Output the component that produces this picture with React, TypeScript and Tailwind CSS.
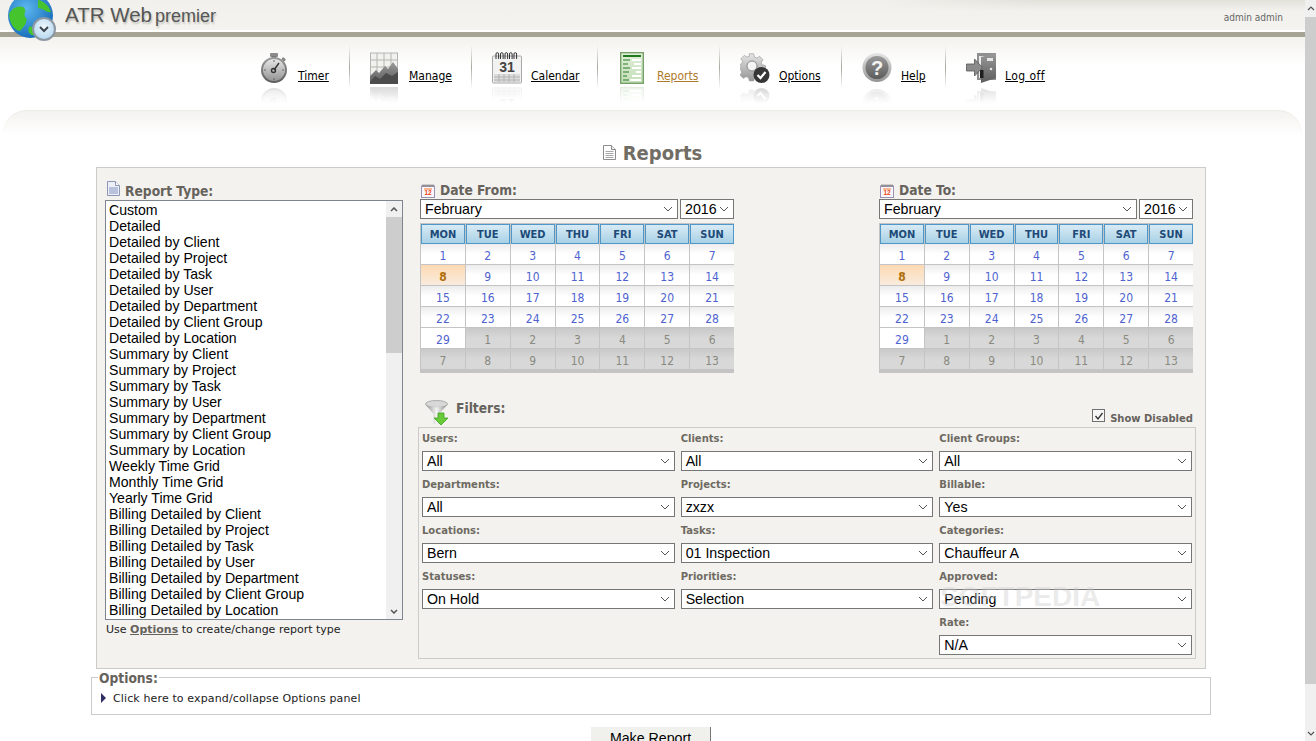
import React from "react";

const REPORTS = ["Custom","Detailed","Detailed by Client","Detailed by Project","Detailed by Task","Detailed by User","Detailed by Department","Detailed by Client Group","Detailed by Location","Summary by Client","Summary by Project","Summary by Task","Summary by User","Summary by Department","Summary by Client Group","Summary by Location","Weekly Time Grid","Monthly Time Grid","Yearly Time Grid","Billing Detailed by Client","Billing Detailed by Project","Billing Detailed by Task","Billing Detailed by User","Billing Detailed by Department","Billing Detailed by Client Group","Billing Detailed by Location"];

const FILTERS: [string, string][][] = [
  [["Users:","All"],["Clients:","All"],["Client Groups:","All"]],
  [["Departments:","All"],["Projects:","zxzx"],["Billable:","Yes"]],
  [["Locations:","Bern"],["Tasks:","01 Inspection"],["Categories:","Chauffeur A"]],
  [["Statuses:","On Hold"],["Priorities:","Selection"],["Approved:","Pending"]],
];

const Defs = () => (
  <defs>
    <linearGradient id="g1" x1="0" y1="0" x2="0" y2="1"><stop offset="0" stopColor="#e6e6e6"/><stop offset="1" stopColor="#949494"/></linearGradient>
    <linearGradient id="g2" x1="0" y1="0" x2="0" y2="1"><stop offset="0" stopColor="#9a9a9a"/><stop offset="1" stopColor="#5c5c5c"/></linearGradient>
    <linearGradient id="g3" x1="0" y1="0" x2="0" y2="1"><stop offset="0" stopColor="#e0efd8"/><stop offset="1" stopColor="#c3dfb8"/></linearGradient>
  </defs>
);

const TimerIcon = () => (
  <svg viewBox="0 0 28 32" className="w-[28px] h-[32px]">
    <Defs/>
    <rect x="10" y="1" width="8" height="4" rx="1" fill="#8b8b8b"/>
    <rect x="12" y="4" width="4" height="3" fill="#777"/>
    <rect x="22" y="6" width="4" height="3" rx="1" fill="#888" transform="rotate(40 24 7)"/>
    <circle cx="14" cy="18" r="13" fill="url(#g2)"/>
    <circle cx="14" cy="18" r="11" fill="url(#g1)"/>
    <path d="M14 18 L19 11" stroke="#333" strokeWidth="1.4"/>
    <circle cx="13.5" cy="18.5" r="2" fill="none" stroke="#333" strokeWidth="1.4"/>
    <path d="M14 8v2M24 18h-2M4 18h2M14 28v-2" stroke="#666" strokeWidth="1"/>
  </svg>
);
const ManageIcon = () => (
  <svg viewBox="0 0 28 32" className="w-[28px] h-[32px]">
    <Defs/>
    <rect x="0.5" y="1" width="27" height="29" fill="#f1f1ee" stroke="#b5b5b0"/>
    <path d="M0 8h28M0 15h28M7 1v20M14 1v18M21 1v16" stroke="#b5b5b0" strokeWidth="1"/>
    <path d="M0 24 L6 18 L9 21 L15 14 L18 17 L23 10 L28 17 V31 H0Z" fill="url(#g2)"/>
    <path d="M0 30 L5 24 L10 27 L16 21 L22 24 L28 20 V32 H0Z" fill="#4b4b4b"/>
  </svg>
);
const CalendarIcon = () => (
  <svg viewBox="0 0 30 32" className="w-[30px] h-[32px]">
    <Defs/>
    <rect x="0.5" y="4" width="29" height="27" rx="1" fill="#f2f2f2" stroke="#a8a8a8"/>
    <rect x="2" y="22" width="26" height="8" fill="#dcdcdc"/>
    <path d="M2 25h26M2 28h26M7 22v8M12 22v8M17 22v8M22 22v8" stroke="#a5a5a5" strokeWidth="0.7"/>
    <path d="M4 7V2a1.3 1.3 0 0 1 2.6 0V7M8.500 7V2a1.300 1.300 0 0 1 2.600 0V7M13 7V2a1.300 1.300 0 0 1 2.600 0V7M17.500 7V2a1.300 1.300 0 0 1 2.600 0V7M22 7V2a1.300 1.300 0 0 1 2.600 0V7" fill="none" stroke="#333" strokeWidth="1"/>
    <text x="15" y="20" textAnchor="middle" fontSize="14" fontWeight="700" fontFamily="'Liberation Sans',sans-serif" fill="#444">31</text>
  </svg>
);
const ReportsIcon = () => (
  <svg viewBox="0 0 24 32" className="w-[24px] h-[32px]">
    <Defs/>
    <rect x="0.700" y="0.700" width="22.600" height="30.600" fill="url(#g3)" stroke="#6f9c62" strokeWidth="1.300"/>
    <rect x="3" y="3" width="18" height="2" fill="#1f7a1f"/>
    <path d="M3 8h7M3 12h5M3 16h7M3 20h6M3 24h4M3 28h6" stroke="#2b7d2b" strokeWidth="1.200"/>
    <path d="M12 8h9M14 12h7M12 16h9M16 20h5M12 24h9M10 28h11" stroke="#fff" strokeWidth="2.200"/>
  </svg>
);
const OptionsIcon = () => (
  <svg viewBox="0 0 30 32" className="w-[30px] h-[32px]">
    <Defs/>
    <path d="M11 1h5l1 4 3 1 3-2 4 4-2 3 1 3 4 1v5l-4 1-1 3 2 3-4 4-3-2-3 1-1 3h-5l-1-4-3-1-3 2-4-4 2-3-1-3-3-1v-5l4-1 1-3-2-3 4-4 3 2 3-1z" fill="url(#g1)" stroke="#9c9c9c" strokeWidth="0.800" transform="scale(0.85) translate(0,1)"/>
    <circle cx="12" cy="14" r="5" fill="#f5f5f5" stroke="#8a8a8a"/>
    <circle cx="21.500" cy="23" r="8" fill="#363636"/>
    <path d="M17.500 23l3 3 5-6" fill="none" stroke="#fff" strokeWidth="2.200"/>
  </svg>
);
const HelpIcon = () => (
  <svg viewBox="0 0 30 32" className="w-[30px] h-[32px]">
    <Defs/>
    <circle cx="15" cy="15.500" r="14.500" fill="url(#g1)"/>
    <circle cx="15" cy="15.500" r="11.500" fill="url(#g2)"/>
    <text x="15" y="22.500" textAnchor="middle" fontSize="20" fontWeight="700" fontFamily="'Liberation Sans',sans-serif" fill="#f3f3f3">?</text>
  </svg>
);
const LogoffIcon = () => (
  <svg viewBox="0 0 32 32" className="w-[32px] h-[32px]">
    <Defs/>
    <rect x="11" y="1" width="19" height="27" fill="#8f8f8f"/>
    <rect x="13" y="4" width="6" height="22" fill="#ececec"/>
    <path d="M15 5 L30 1 V26 L15 31Z" fill="url(#g2)"/>
    <rect x="21" y="6" width="6" height="3" fill="#e6e6e6"/>
    <rect x="14" y="18" width="3.500" height="8" fill="#1e1e1e"/>
    <circle cx="25" cy="17" r="1.300" fill="#e4e4e4"/>
    <path d="M0.500 12h8V7l8 8.500-8 8.500v-5h-8z" fill="#8b8b8b" stroke="#555" strokeWidth="0.800"/>
  </svg>
);

const NAV = [
  { label: "Timer", Icon: TimerIcon, box: "w-[38px]", text: "w-[31px]" },
  { label: "Manage", Icon: ManageIcon, box: "w-[39px]", text: "w-[42px]" },
  { label: "Calendar", Icon: CalendarIcon, box: "w-[39px]", text: "w-[46px]" },
  { label: "Reports", Icon: ReportsIcon, box: "w-[39px] pl-[2px]", text: "w-[42px]", active: true },
  { label: "Options", Icon: OptionsIcon, box: "w-[39px]", text: "w-[42px]" },
  { label: "Help", Icon: HelpIcon, box: "w-[39px]", text: "w-[24px]" },
  { label: "Log off", Icon: LogoffIcon, box: "w-[39px]", text: "w-[39px] tracking-[0.450px]" },
];

const Chevron = () => (
  <svg viewBox="0 0 10 6" className="w-[10px] h-[6px] shrink-0 text-[#555]"><path d="M1 1l4 4 4-4" fill="none" stroke="currentColor" strokeWidth="1"/></svg>
);

const Sel = ({ value, cls = "" }: { value: string; cls?: string }) => (
  <div className={`h-[20px] bg-white border border-[#767676] flex items-center justify-between pl-[4px] pr-[4px] text-[14.200px] leading-none text-black font-['Liberation_Sans',sans-serif] ${cls}`}>
    <span>{value}</span><Chevron/>
  </div>
);

const SmallCal = () => (
  <svg viewBox="0 0 14 14" className="w-[14px] h-[14px] shrink-0">
    <rect x="0.500" y="2" width="13" height="11.500" fill="#f8f7fb" stroke="#9a90b4"/>
    <path d="M2 3V0.500M4 3V0.500M6 3V0.500M8 3V0.500M10 3V0.500M12 3V0.500" stroke="#444" strokeWidth="0.800"/>
    <rect x="3" y="4.500" width="8" height="1" fill="#ff7a30"/>
    <text x="7" y="11" textAnchor="middle" fontSize="6.500" fontWeight="700" fill="#f0420e" fontFamily="'Liberation Sans',sans-serif">12</text>
  </svg>
);
const DocIcon = () => (
  <svg viewBox="0 0 13 15" className="w-[13px] h-[15px] shrink-0">
    <path d="M0.500 0.500h8l4 4v10h-12z" fill="#eef0f7" stroke="#8f96b4"/>
    <path d="M8.500 0.500v4h4" fill="#fff" stroke="#8f96b4"/>
    <rect x="2" y="6" width="9" height="7" fill="#b9c2dc"/>
  </svg>
);
const TitleDoc = () => (
  <svg viewBox="0 0 13 15" className="w-[13px] h-[15px] shrink-0">
    <path d="M0.500 0.500h8l4 4v10h-12z" fill="#fff" stroke="#8d8d8d"/>
    <path d="M8.500 0.500v4h4" fill="#eee" stroke="#8d8d8d"/>
    <path d="M2.500 6.500h8M2.500 8.500h8M2.500 10.500h8M2.500 12.500h8" stroke="#a8a8a8" strokeWidth="1"/>
  </svg>
);
const Funnel = () => (
  <svg viewBox="0 0 24 26" className="w-[24px] h-[26px] shrink-0">
    <defs><linearGradient id="fn" x1="0" y1="0" x2="1" y2="0"><stop offset="0" stopColor="#8c8c8c"/><stop offset="0.500" stopColor="#f4f4f4"/><stop offset="1" stopColor="#8a8a8a"/></linearGradient></defs>
    <ellipse cx="11.500" cy="4" rx="11" ry="3.500" fill="#d8d8d8" stroke="#aaa"/>
    <path d="M0.500 4.500 L8.500 14 V24 H14 V14 L22.500 4.500 C18 8 5 8 0.500 4.500Z" fill="url(#fn)"/>
    <path d="M13 13h6v5h4l-7 7-7-7h4z" fill="#6acb3a" stroke="#3f9f22" strokeWidth="0.800"/>
  </svg>
);

const DAYS: [number, boolean][] = [
  ...Array.from({ length: 29 }, (_, i) => [i + 1, false] as [number, boolean]),
  ...Array.from({ length: 13 }, (_, i) => [i + 1, true] as [number, boolean]),
];

const COND = "font-['DejaVu_Sans_Condensed','DejaVu_Sans',sans-serif]";

const Calendar = () => (
  <div className="w-[314px] h-[150px] bg-[#c4c4c4] pb-[3px] font-['DejaVu_Sans_Condensed','DejaVu_Sans',sans-serif]">
    <div className="grid grid-cols-7 h-[21px] pt-[1px] gap-x-[1px] pl-[1px]">
      {["MON","TUE","WED","THU","FRI","SAT","SUN"].map((d) => (
        <div key={d} className="h-[20px] pt-[3px] border border-[#4f97c8] bg-gradient-to-b from-[#d8ebf5] to-[#a8d1e6] flex items-center justify-center text-[11px] font-bold text-[#1d4a78]">{d}</div>
      ))}
    </div>
    <div className="grid grid-cols-7 gap-x-[1px] gap-y-[1px] pl-[1px]">
      {DAYS.map(([n, other], i) => {
        const today = i === 7;
        return (
          <div key={i} className={`h-[20px] pt-[3px] flex items-center justify-center text-[12px] bg-gradient-to-b ${today ? "from-[#fdd9b2] to-[#f8ecde] text-[#b06f0a] font-bold" : other ? "from-[#c9c9c9] via-[#d8d8d8] to-[#d8d8d8] text-[#8a8a80]" : i >= 28 ? "from-white to-white text-[#4f63d0]" : "from-[#ececec] via-white to-white text-[#4f63d0]"}`}>{n}</div>
        );
      })}
    </div>
  </div>
);

const DateBlock = ({ title }: { title: string }) => (
  <div className="w-[314px]">
    <div className={`h-[17px] flex items-center gap-[5px] pl-[1px] text-[13.700px] font-bold text-[#66625c] ${COND}`}><SmallCal/><span>{title}</span></div>
    <div className="flex gap-[2px] mb-[4px]">
      <Sel value="February" cls="flex-1"/>
      <Sel value="2016" cls="w-[54px]"/>
    </div>
    <Calendar/>
  </div>
);

const SideBar = () => (
  <aside className="w-[11px] shrink-0 h-[741px] bg-[#f0f0f0] flex flex-col">
    <div className="h-[17px] flex items-center justify-center"><svg viewBox="0 0 8 5" className="w-[8px] h-[5px]"><path d="M1 4l3-3 3 3" fill="none" stroke="#555" strokeWidth="1.200"/></svg></div>
    <div className="h-[667px] bg-[#cdcdcd]"/>
    <div className="flex-1 flex items-end justify-center pb-[5px]"><svg viewBox="0 0 8 5" className="w-[8px] h-[5px]"><path d="M1 1l3 3 3-3" fill="none" stroke="#555" strokeWidth="1.200"/></svg></div>
  </aside>
);

export default function App() {
  return (
    <div className="w-[1316px] h-[741px] overflow-hidden flex bg-white font-['DejaVu_Sans',sans-serif]">
      <div className="w-[1305px] shrink-0 h-[741px] overflow-hidden relative">
        {/* header */}
        <header className="h-[30px] bg-gradient-to-b from-[#f1f0ec] to-[#f4f3ef] relative">
          <div className="absolute right-0 top-0 w-[420px] h-[10px] bg-gradient-to-b from-[#e2e1da] to-transparent [mask-image:linear-gradient(to_right,transparent,#000_35%)]"/>
          <div className="flex items-center h-[30px] pl-[65px] pt-[1px] text-[#555] [text-shadow:1px_2px_2px_#c0c0ba] font-['Liberation_Sans',sans-serif]">
            <span className="text-[20.500px]">ATR Web</span>
            <span className="text-[18px] ml-[3px] mt-[2px]">premier</span>
            <span className={`ml-auto mr-[22px] mt-[3px] text-[10px] text-[#666] [text-shadow:none] ${COND}`}>admin admin</span>
          </div>
        </header>
        <div className="h-[2px] bg-white"/>
        <div className="h-[5px] bg-[#a5a394]"/>
        {/* logo */}
        <svg viewBox="0 0 60 46" className="absolute left-0 top-0 w-[60px] h-[46px]">
          <defs>
            <radialGradient id="lg" cx="0.400" cy="0.350" r="0.800"><stop offset="0" stopColor="#5ab7ee"/><stop offset="1" stopColor="#0f5fb0"/></radialGradient>
            <radialGradient id="lc" cx="0.500" cy="0.400" r="0.700"><stop offset="0" stopColor="#eef7fd"/><stop offset="1" stopColor="#a9d2ee"/></radialGradient>
          </defs>
          <circle cx="30.500" cy="15.500" r="22.500" fill="url(#lg)"/>
          <path d="M9 14 C12 8 18 5 23 7 C28 10 23 14 25 17 C29 19 25 26 20 31 C14 30 10 24 9 14Z" fill="#45c42e"/>
          <path d="M38 0 C44 1 49 6 51 12 C46 13 43 8 38 8Z" fill="#45c42e"/>
          <path d="M29 27 C33 25 36 30 34 35 C30 36 27 31 29 27Z" fill="#45c42e"/>
          <circle cx="44" cy="29" r="11" fill="url(#lc)" stroke="#8d97a3" strokeWidth="2"/>
          <path d="M40 27 L44 31 L48 27" fill="none" stroke="#3c4650" strokeWidth="2"/>
        </svg>
        {/* nav */}
        <nav className="h-[73px] bg-gradient-to-b from-[#f3f2ee] via-white via-40% to-white pl-[260px] flex items-start">
          {NAV.map((n, i) => (
            <React.Fragment key={n.label}>
              <div className="flex items-start pt-[15px]">
                <div className={n.box}>
                  <n.Icon/>
                  <div className="h-[17px] mt-[3px] overflow-hidden opacity-20 [mask-image:linear-gradient(to_bottom,#000,transparent)]">
                    <div className="-scale-y-100 origin-center"><n.Icon/></div>
                  </div>
                </div>
                <a className={`mt-[16px] text-[12px] leading-[16px] underline whitespace-nowrap ${COND} ${n.text} ${n.active ? "text-[#b07a2c]" : "text-black"}`}>{n.label}</a>
              </div>
              {i < NAV.length - 1 && <div className="w-[1px] h-[44px] mt-[8px] mx-[20px] bg-gradient-to-b from-transparent via-[#aaa9a0] to-transparent"/>}
            </React.Fragment>
          ))}
        </nav>
        {/* curved tab */}
        <div className="mx-[3px] h-[25px] rounded-t-[24px] border-t border-[#ecebe6] bg-gradient-to-b from-[#f4f3ef] to-white"/>
        <div className="h-[32px] pt-[3px] flex items-center justify-center gap-[7px]">
          <TitleDoc/>
          <h1 className={`text-[20px] font-bold text-[#716d65] ${COND}`}>Reports</h1>
        </div>

        {/* main panel */}
        <section className="ml-[96px] w-[1110px] h-[502px] border border-[#cbcbc8] bg-[#f3f2ef] flex pt-[14px] pl-[8px]">
          <div className="w-[298px] shrink-0">
            <div className={`h-[18px] flex items-start gap-[5px] pl-[2px] text-[13.700px] leading-[18px] font-bold text-[#66625c] ${COND}`}><span className="-mt-[1px]"><DocIcon/></span><span>Report Type:</span></div>
            <div className="h-[420px] bg-white border border-[#7f8590] flex">
              <ul className="flex-1 pt-[1px] pl-[3px] text-[14.100px] leading-[16px] text-black font-['Liberation_Sans',sans-serif]">
                {REPORTS.map((r) => <li key={r} className="h-[16px] whitespace-nowrap">{r}</li>)}
              </ul>
              <div className="w-[16px] bg-[#f0f0f0] flex flex-col">
                <div className="h-[16px] flex items-center justify-center"><svg viewBox="0 0 8 5" className="w-[8px] h-[5px]"><path d="M1 4l3-3 3 3" fill="none" stroke="#555" strokeWidth="1.500"/></svg></div>
                <div className="h-[136px] bg-[#cdcdcd]"/>
                <div className="flex-1 flex items-end justify-center pb-[5px]"><svg viewBox="0 0 8 5" className="w-[8px] h-[5px]"><path d="M1 1l3 3 3-3" fill="none" stroke="#555" strokeWidth="1.500"/></svg></div>
              </div>
            </div>
            <p className="mt-[3px] pl-[1px] text-[11px] leading-[13px] text-[#222] whitespace-nowrap">Use <a className="underline font-bold text-[#66625c]">Options</a> to create/change report type</p>
          </div>
          <div className="w-[778px] ml-[15px] shrink-0">
            <div className="flex gap-[145px] pl-[2px]">
              <DateBlock title="Date From:"/>
              <DateBlock title="Date To:"/>
            </div>
            <div className="h-[27px] mt-[27px] flex items-start pl-[7px]">
              <Funnel/>
              <span className={`ml-[7px] mt-[-2px] text-[13.700px] font-bold text-[#66625c] ${COND}`}>Filters:</span>
              <div className="ml-auto mr-[3px] mt-[9px] flex items-start gap-[5px]">
                <span className="w-[13px] h-[13px] border border-[#707070] bg-[#f6f6f6] flex items-center justify-center"><svg viewBox="0 0 10 10" className="w-[10px] h-[10px]"><path d="M1.500 5l2.500 3 4.500-6" fill="none" stroke="#333" strokeWidth="1.300"/></svg></span>
                <span className="mt-[4px] text-[10px] leading-[12px] font-bold text-[#66625c]">Show Disabled</span>
              </div>
            </div>
            <div className="h-[232px] border border-[#cbcbc8] pl-[3px] pr-[3px] relative">
              <div className="grid grid-cols-3 gap-x-[6px]">
                {[...FILTERS.flat(), ["", ""], ["", ""], ["Rate:", "N/A"]].map(([l, v], i) => (
                  <div key={i} className="h-[46px]">
                    {l && <>
                      <div className="h-[23px] pt-[5px] text-[10px] leading-[12px] font-bold text-[#6e6a62]">{l}</div>
                      <Sel value={v}/>
                    </>}
                  </div>
                ))}
              </div>
              <span className="absolute left-[521px] top-[155px] text-[28px] leading-none font-bold text-[#cccccc]/40 font-['Liberation_Sans',sans-serif]">SOFTPEDIA</span>
            </div>
          </div>
        </section>

        {/* options */}
        <fieldset className="ml-[91px] w-[1120px] h-[46px] border border-[#cbcbc8] px-[9px] pt-0">
          <legend className={`ml-[-3px] px-[1px] h-[16px] text-[13.700px] leading-[18px] font-bold text-[#66625c] ${COND}`}>Options:</legend>
          <div className="flex items-center gap-[7px] mt-[7px]">
            <svg viewBox="0 0 5 10" className="w-[5px] h-[10px] -mt-[2px]"><path d="M0 0l5 5-5 5z" fill="#2f2f66"/></svg>
            <span className="text-[11px] leading-[13px] tracking-[0.130px] text-[#222]">Click here to expand/collapse Options panel</span>
          </div>
        </fieldset>

        <div className="ml-[591px] mt-[11px]">
          <button className="w-[120px] h-[22px] bg-[#f0f0ec] border-r border-[#777] text-[14.200px] leading-none text-black font-['Liberation_Sans',sans-serif]">Make Report</button>
        </div>
      </div>
      <SideBar/>
    </div>
  );
}
